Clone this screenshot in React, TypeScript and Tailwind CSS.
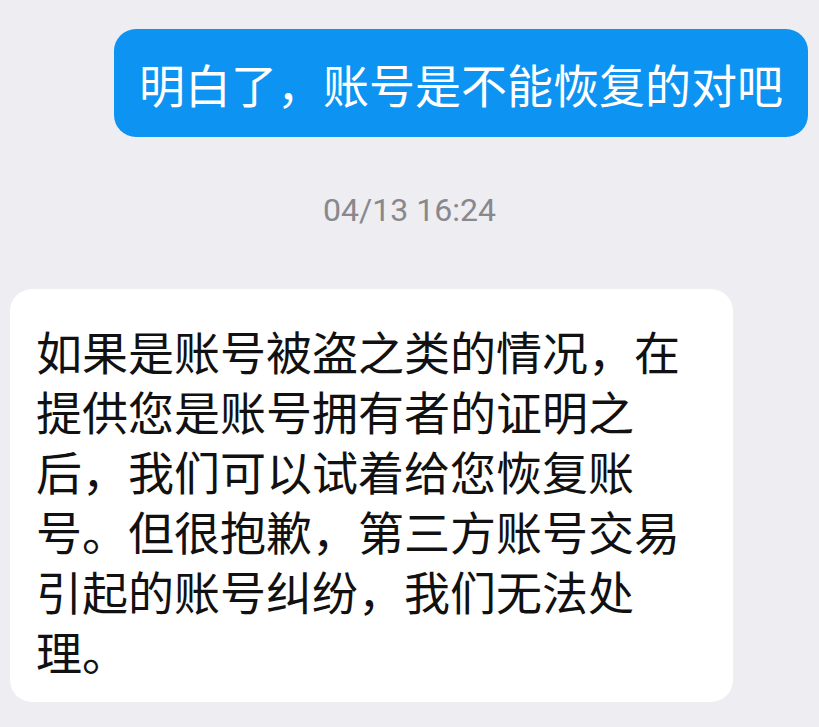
export default function App() {
  const cjk = { fontFamily: '"Noto Sans CJK SC", "Noto Sans", sans-serif' };

  return (
    <main className="min-h-screen w-full bg-[#ededf2] flex flex-col overflow-hidden">
      <div className="self-end mr-[11px] mt-[29px] bg-[#0d93f1] rounded-[22px] px-[25px] py-[24px]">
        <p style={cjk} className="text-white text-[46px] leading-[60px] whitespace-nowrap">
          明白了，账号是不能恢复的对吧
        </p>
      </div>

      <div className="mt-[55px] flex justify-center">
        <span style={{ fontFamily: 'Roboto, "Liberation Sans", sans-serif' }} className="text-[32px] leading-[36px] text-[#88888d]">
          04/13 16:24
        </span>
      </div>

      <div className="mt-[61px] ml-[10px] w-[723px] bg-white rounded-[22px] pl-[26px] pr-[26px] pt-[31px] pb-[22px]">
        <p style={cjk} className="text-[#111111] text-[46px] leading-[60px]">
          如果是账号被盗之类的情况，在<br />
          提供您是账号拥有者的证明之<br />
          后，我们可以试着给您恢复账<br />
          号。但很抱歉，第三方账号交易<br />
          引起的账号纠纷，我们无法处<br />
          理。
        </p>
      </div>
    </main>
  );
}
